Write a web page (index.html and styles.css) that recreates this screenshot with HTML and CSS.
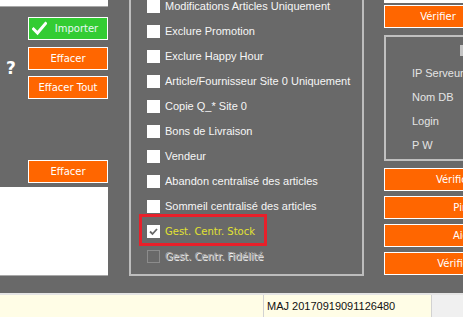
FILE: index.html
```html
<!DOCTYPE html>
<html lang="fr">
<head>
  <meta charset="UTF-8" />
  <meta name="viewport" content="width=device-width, initial-scale=1.0" />
  <title>Synchronisation</title>
  <link rel="stylesheet" href="styles.css">
</head>
<body>

  <div class="window">
    <div class="main">

      <!-- Left column: import buttons -->
      <div class="left">
        <div class="paper paper-top"></div>
        <div class="tools">
          <div class="help">?</div>
          <div class="btn-stack">
            <button class="btn btn-green btn-import">
              <svg class="check-icon" width="15" height="15" viewBox="0 0 15 15">
                <path d="M1.5 8 L5.5 12 L13.5 2.5" fill="none" stroke="#fff" stroke-width="3" stroke-linecap="square"/>
              </svg>
              Importer
            </button>
            <button class="btn">Effacer</button>
            <button class="btn">Effacer Tout</button>
          </div>
        </div>
        <button class="btn btn-clear">Effacer</button>
        <div class="paper paper-bottom"></div>
      </div>

      <!-- Options group -->
      <div class="options">
        <div class="opt"><span class="box"></span><span class="label">Modifications Articles Uniquement</span></div>
        <div class="opt"><span class="box"></span><span class="label">Exclure Promotion</span></div>
        <div class="opt"><span class="box"></span><span class="label">Exclure Happy Hour</span></div>
        <div class="opt"><span class="box"></span><span class="label">Article/Fournisseur Site 0 Uniquement</span></div>
        <div class="opt"><span class="box"></span><span class="label">Copie Q_* Site 0</span></div>
        <div class="opt"><span class="box"></span><span class="label">Bons de Livraison</span></div>
        <div class="opt"><span class="box"></span><span class="label">Vendeur</span></div>
        <div class="opt"><span class="box"></span><span class="label">Abandon centralisé des articles</span></div>
        <div class="opt"><span class="box"></span><span class="label">Sommeil centralisé des articles</span></div>
        <div class="opt opt-highlight">
          <span class="box box-checked">
            <svg width="11" height="11" viewBox="0 0 11 11">
              <path d="M2 5.5 L4.5 8 L9 3" fill="none" stroke="#666" stroke-width="1.8"/>
            </svg>
          </span>
          <span class="label label-wide label-yellow">Gest. Centr. Stock</span>
        </div>
        <div class="opt opt-disabled"><span class="box"></span><span class="label label-wide">Gest. Centr. Fidélité</span></div>
      </div>

      <!-- Right column: server settings -->
      <div class="right">
        <div class="edge-top"></div>
        <button class="btn btn-verify">Vérifier</button>
        <div class="server">
          <div class="server-head"><span class="mini-box"></span></div>
          <div class="field">IP Serveur</div>
          <div class="field">Nom DB</div>
          <div class="field">Login</div>
          <div class="field">P W</div>
        </div>
        <div class="btn-stack btn-stack-right">
          <button class="btn btn-wide">Vérification</button>
          <button class="btn btn-wide">Ping</button>
          <button class="btn btn-wide">Aide</button>
          <button class="btn btn-wide">Vérifier BD</button>
        </div>
      </div>

    </div>

    <!-- Status bar -->
    <div class="statusbar">
      <div class="status-cell status-first"></div>
      <div class="status-cell status-text">MAJ 20170919091126480</div>
      <div class="status-rest"></div>
    </div>
  </div>

</body>
</html>
```

FILE: styles.css
```css
/* Page */
body {
  margin: 0;
  background: #696969;
  overflow: hidden;
  font-family: "Liberation Sans", Arial, sans-serif;
  font-size: 11px;
}

.window {
  width: 463px;
  height: 317px;
  overflow: hidden;
}

.main {
  display: flex;
  height: 293px;
}

/* Buttons */
.btn {
  box-sizing: border-box;
  height: 23px;
  width: 80px;
  display: flex;
  align-items: center;
  justify-content: center;
  padding: 0;
  border: 1px solid #fff;
  background: #ff6600;
  color: #fff;
  font-family: "DejaVu Sans", Verdana, sans-serif;
  font-size: 10px;
  flex-shrink: 0;
}

.btn-green {
  background: #33cc33;
  color: #e8f8f4;
}

.btn-import {
  gap: 8px;
  padding-right: 6px;
  margin-bottom: 1px;
}

.btn-stack {
  display: flex;
  flex-direction: column;
  gap: 6px;
}

/* Left column */
.left {
  width: 108px;
  flex-shrink: 0;
  display: flex;
  flex-direction: column;
}

.paper {
  background: #fff;
  border-bottom: 1px solid #a8a8a8;
}

.paper-top {
  height: 6px;
}

.paper-bottom {
  height: 88px;
  margin-top: 4px;
}

.tools {
  display: flex;
  margin-top: 10px;
}

.help {
  width: 28px;
  padding: 43px 0 0 6px;
  box-sizing: border-box;
  color: #fff;
  font-family: "DejaVu Sans", Verdana, sans-serif;
  font-weight: bold;
  font-size: 17px;
  line-height: 17px;
}

.btn-clear {
  margin: 61px 0 0 28px;
}

/* Options group */
.options {
  box-sizing: border-box;
  width: 235px;
  height: 276px;
  margin-left: 21px;
  padding-left: 16px;
  border: 2px solid #bdbdbd;
  border-top: none;
  flex-shrink: 0;
}

.opt {
  position: relative;
  display: flex;
  align-items: flex-start;
  gap: 5px;
  height: 25px;
  color: #f6f6f6;
}

.box {
  box-sizing: border-box;
  width: 13px;
  height: 13px;
  background: #fff;
  display: flex;
  align-items: center;
  justify-content: center;
  flex-shrink: 0;
}

.label {
  line-height: 12px;
  white-space: nowrap;
}

.label-wide {
  font-family: "DejaVu Sans", Verdana, sans-serif;
  font-size: 10px;
  line-height: 13px;
}

.label-yellow {
  color: #e2e232;
}

/* Red frame around the selected option */
.opt-highlight::before {
  content: "";
  position: absolute;
  left: -8px;
  top: -11px;
  width: 128px;
  height: 32px;
  box-sizing: border-box;
  border: 3px solid #e8202a;
}

.opt-disabled .box {
  background: transparent;
  border: 1px solid #8c8c8c;
}

.opt-disabled .label {
  color: #a8a8a8;
  text-shadow: 1px 1px 0 #ececec;
}

/* Right column */
.right {
  margin-left: 20px;
  display: flex;
  flex-direction: column;
  flex-shrink: 0;
}

.edge-top {
  height: 3px;
  width: 160px;
  background: #fff;
}

.btn-verify {
  width: 108px;
  margin-top: 2px;
}

.server {
  box-sizing: border-box;
  width: 160px;
  height: 126px;
  margin-top: 7px;
  padding-left: 26px;
  border: 2px solid #c0c0c0;
  color: #e4e4e4;
}

.server-head {
  height: 11px;
  margin-top: 8px;
  padding-left: 48px;
}

.mini-box {
  display: block;
  width: 12px;
  height: 11px;
  background: #c4c4c4;
}

.field {
  height: 24px;
  line-height: 24px;
}

.server-head + .field {
  margin-top: 5px;
}

.btn-stack-right {
  margin-top: 7px;
  gap: 5px;
}

.btn-wide {
  width: 160px;
}

/* Status bar */
.statusbar {
  display: flex;
  height: 24px;
  border-top: 2px solid #e4e4e4;
  box-sizing: border-box;
}

.status-cell {
  background: #fffde6;
  height: 100%;
}

.status-first {
  width: 263px;
  border-right: 1px solid #d2d2d2;
}

.status-text {
  width: 168px;
  padding-left: 3px;
  box-sizing: border-box;
  line-height: 22px;
  color: #111;
  border-right: 1px solid #d2d2d2;
}

.status-rest {
  flex: 1;
  background: #f0f0f0;
}
```
